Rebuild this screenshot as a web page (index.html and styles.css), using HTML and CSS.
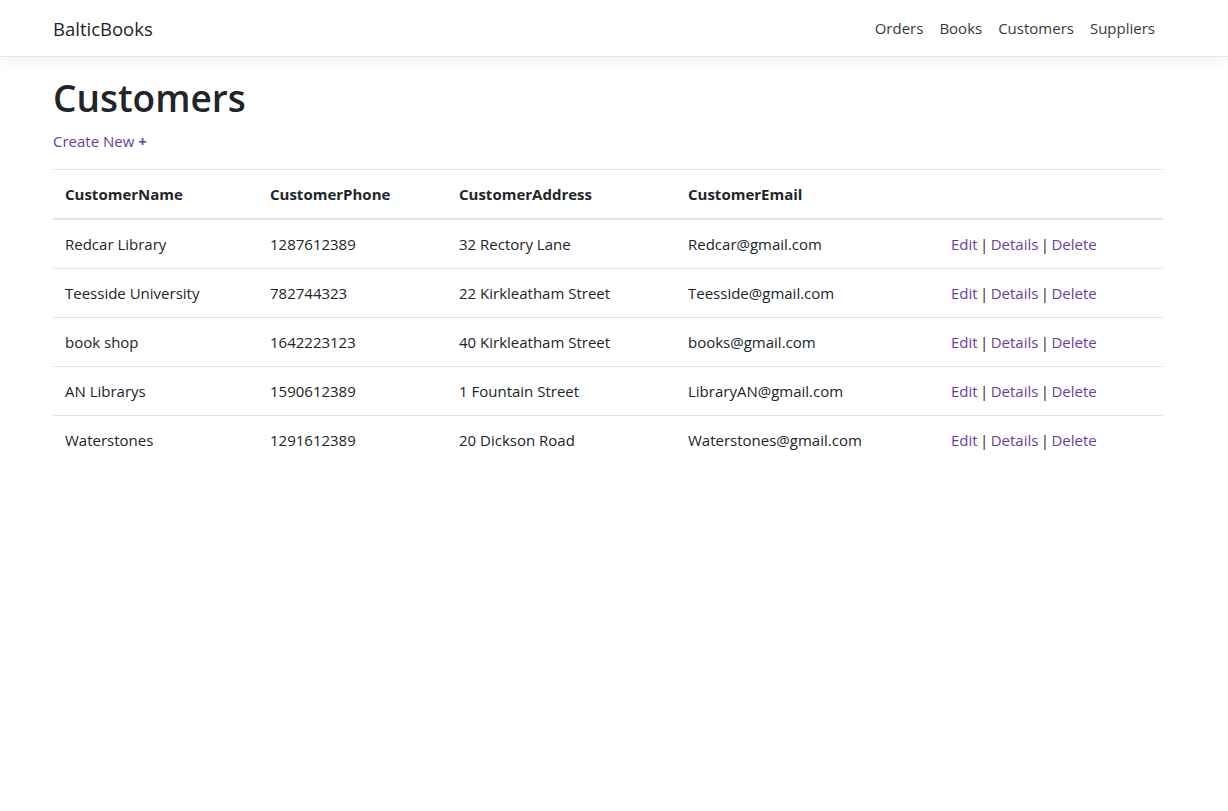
FILE: index.html
```html
<!DOCTYPE html>
<html lang="en">
<head>
<meta charset="utf-8">
<title>Customers - BalticBooks</title>
<link rel="stylesheet" href="styles.css">
</head>
<body>
<header class="navbar">
  <div class="container nav-inner">
    <a class="brand" href="#">BalticBooks</a>
    <nav class="nav-links">
      <a href="#">Orders</a>
      <a href="#">Books</a>
      <a href="#">Customers</a>
      <a href="#">Suppliers</a>
    </nav>
  </div>
</header>
<main class="container">
  <h1 class="title">Customers</h1>
  <p class="create"><a href="#">Create New <span class="plus">+</span></a></p>
  <table class="table">
    <colgroup>
      <col class="c1"><col class="c2"><col class="c3"><col class="c4"><col class="c5">
    </colgroup>
    <thead>
      <tr><th>CustomerName</th><th>CustomerPhone</th><th>CustomerAddress</th><th>CustomerEmail</th><th></th></tr>
    </thead>
    <tbody>
      <tr><td>Redcar Library</td><td>1287612389</td><td>32 Rectory Lane</td><td>Redcar@gmail.com</td><td class="actions"><a href="#">Edit</a> | <a href="#">Details</a> | <a href="#">Delete</a></td></tr>
      <tr><td>Teesside University</td><td>782744323</td><td>22 Kirkleatham Street</td><td>Teesside@gmail.com</td><td class="actions"><a href="#">Edit</a> | <a href="#">Details</a> | <a href="#">Delete</a></td></tr>
      <tr><td>book shop</td><td>1642223123</td><td>40 Kirkleatham Street</td><td>books@gmail.com</td><td class="actions"><a href="#">Edit</a> | <a href="#">Details</a> | <a href="#">Delete</a></td></tr>
      <tr><td>AN Librarys</td><td>1590612389</td><td>1 Fountain Street</td><td>LibraryAN@gmail.com</td><td class="actions"><a href="#">Edit</a> | <a href="#">Details</a> | <a href="#">Delete</a></td></tr>
      <tr><td>Waterstones</td><td>1291612389</td><td>20 Dickson Road</td><td>Waterstones@gmail.com</td><td class="actions"><a href="#">Edit</a> | <a href="#">Details</a> | <a href="#">Delete</a></td></tr>
    </tbody>
  </table>
</main>
</body>
</html>
```

FILE: styles.css
```css
* { box-sizing: border-box; }
html, body { margin: 0; padding: 0; }
body {
  font-family: "Open Sans", "Noto Sans", "Liberation Sans", sans-serif;
  font-size: 15px;
  line-height: 24px;
  color: #212529;
  background: #fff;
}
a { text-decoration: none; }
.container {
  width: 1110px;
  margin-left: 53px;
}
.navbar {
  height: 57px;
  border-bottom: 1px solid #e3e5e8;
  box-shadow: 0 4px 12px rgba(0, 0, 0, 0.05);
  margin-bottom: 16px;
}
.nav-inner {
  height: 56px;
  display: flex;
  align-items: center;
  justify-content: space-between;
}
.brand {
  font-size: 18.5px;
  color: #212529;
  line-height: 30px;
  padding-top: 1px;
}
.nav-links {
  display: flex;
}
.nav-links a {
  color: #343a40;
  padding: 0 8px;
}
.title {
  margin: 0 0 8px;
  padding-top: 1px;
  font-size: 37px;
  font-weight: 600;
  line-height: 47px;
  color: #212529;
}
.create {
  margin: 0 0 16px;
}
.create a { color: #6a3d9e; }
.plus { font-weight: 700; }
.table {
  width: 1110px;
  border-collapse: collapse;
  table-layout: fixed;
}
.c1 { width: 205px; }
.c2 { width: 189px; }
.c3 { width: 229px; }
.c4 { width: 263px; }
.c5 { width: 224px; }
.table th, .table td {
  padding: 12px;
  text-align: left;
  vertical-align: top;
  border-top: 1px solid #dee2e6;
  white-space: nowrap;
}
.table th {
  font-weight: 700;
  border-bottom: 2px solid #dee2e6;
}
.actions {
  color: #212529;
  word-spacing: -1.5px;
}
.actions a {
  color: #6a3d9e;
  word-spacing: normal;
}
```
